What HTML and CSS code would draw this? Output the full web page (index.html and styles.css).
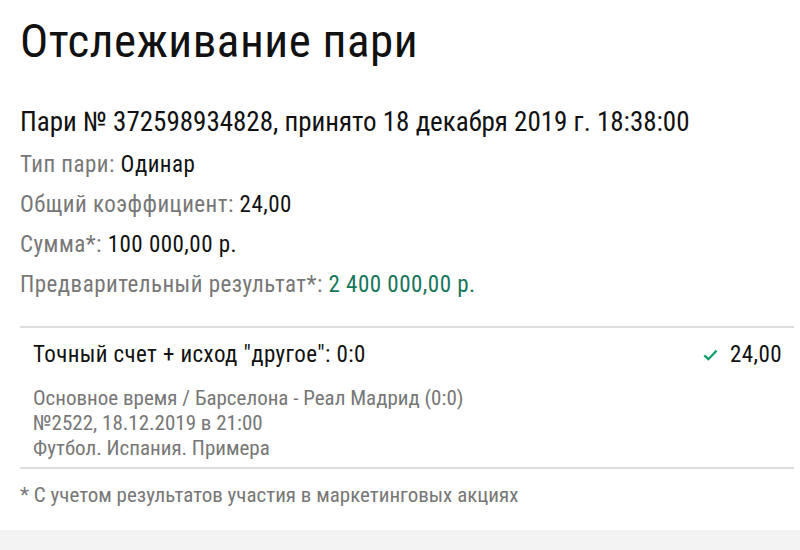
FILE: index.html
```html
<!DOCTYPE html>
<html lang="ru">
<head>
    <meta charset="UTF-8">
    <title>Отслеживание пари</title>
    <link rel="stylesheet" href="styles.css">
</head>
<body>

<div class="container">

    <h1>Отслеживание пари</h1>

    <!-- Bet summary -->
    <div class="bet-info">
        <h2>Пари № 372598934828, принято 18 декабря 2019 г. 18:38:00</h2>
        <p><span class="label">Тип пари:</span> Одинар</p>
        <p><span class="label">Общий коэффициент:</span> 24,00</p>
        <p><span class="label">Сумма*:</span> 100 000,00 р.</p>
        <p><span class="label">Предварительный результат*:</span> <span class="win">2 400 000,00 р.</span></p>
    </div>

    <!-- Events of the bet -->
    <div class="events">
        <div class="event">
            <div class="event-head">
                <span class="outcome">Точный счет + исход "другое": 0:0</span>
                <span class="coef">
                    <svg class="check" width="15" height="12" viewBox="0 0 15 12"><path d="M1.3 6.3 L5.4 10.2 L13.6 1.6" fill="none" stroke="#16a06e" stroke-width="2.3"/></svg>
                    24,00
                </span>
            </div>
            <div class="event-meta">
                <div>Основное время / Барселона - Реал Мадрид (0:0)</div>
                <div>№2522, 18.12.2019 в 21:00</div>
                <div>Футбол. Испания. Примера</div>
            </div>
        </div>
    </div>

    <p class="note">* С учетом результатов участия в маркетинговых акциях</p>

</div>

<footer></footer>

</body>
</html>
```

FILE: styles.css
```css
body {
    font-family: 'Roboto', 'Liberation Sans', sans-serif;
    font-stretch: condensed;
    margin: 0;
    padding: 0;
    background: #fff;
    color: #111;
}

.container {
    margin: 0 6px 0 20px;
}

h1 {
    font-size: 47px;
    font-weight: 400;
    letter-spacing: 0.5px;
    margin: 0;
    padding-top: 15px;
    line-height: 52px;
}

.bet-info h2 {
    font-size: 27px;
    font-weight: 400;
    margin: 40px 0 0;
    line-height: 30px;
}

.bet-info {
    padding-bottom: 21px;
}

.bet-info p {
    font-size: 23px;
    letter-spacing: 0.47px;
    margin: 0;
    line-height: 40px;
}

.bet-info h2 + p {
    margin-top: 8px;
}

.label {
    color: #777;
}

.win {
    color: #16765a;
}

.events {
    border-top: 2px solid #ddd;
    border-bottom: 2px solid #ddd;
}

.event {
    padding: 13px 12px 6px 13px;
}

.event-head {
    display: flex;
    justify-content: space-between;
    align-items: center;
    font-size: 23px;
    letter-spacing: 0.4px;
    line-height: 28px;
}

.coef {
    display: flex;
    align-items: center;
    gap: 12px;
}

.event-meta {
    margin-top: 17px;
    font-size: 21px;
    line-height: 25px;
    color: #777;
}

.note {
    font-size: 21px;
    color: #777;
    margin: 14px 0 0;
    line-height: 25px;
}

footer {
    position: absolute;
    left: 0;
    right: 0;
    top: 530px;
    height: 20px;
    background: #f3f3f3;
}
```
